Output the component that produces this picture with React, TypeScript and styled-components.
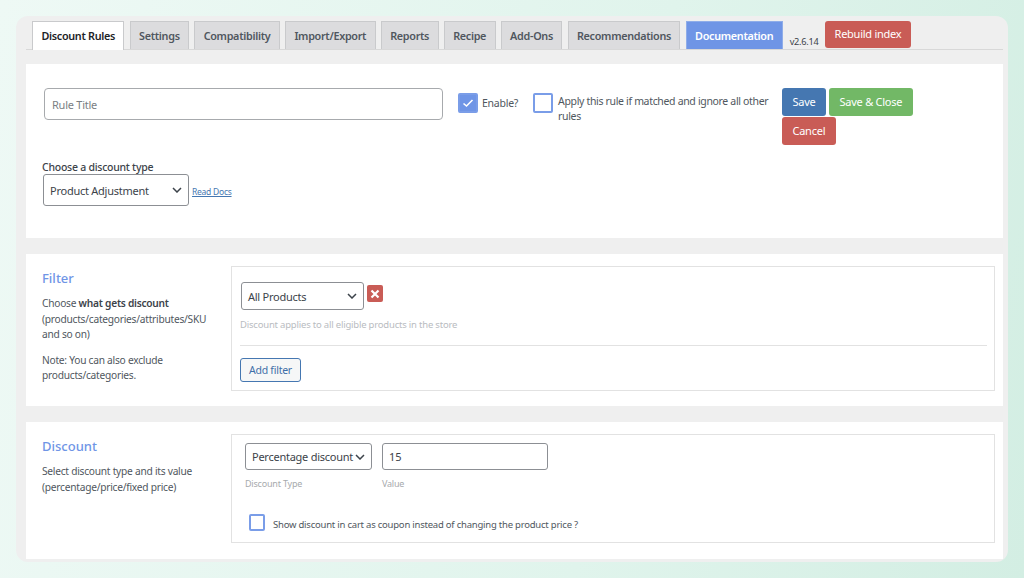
import React from 'react';
import styled, { createGlobalStyle } from 'styled-components';

const GlobalStyle = createGlobalStyle`
  html, body {
    margin: 0;
    padding: 0;
    height: 578px;
    overflow: hidden;
  }
  body {
    font-family: 'Noto Sans', 'Open Sans', sans-serif;
    letter-spacing: -0.25px;
    color: #50575e;
    background: linear-gradient(100deg, #eef9f5 0%, #e0f4ec 60%, #d3eee3 100%);
  }
  * {
    box-sizing: border-box;
  }
`;

const Chevron = () => (
  <svg width="10" height="6" viewBox="0 0 10 6" fill="none">
    <path d="M1 1l4 4 4-4" stroke="#3c434a" strokeWidth="1.5" />
  </svg>
);

const Tick = () => (
  <svg width="12" height="10" viewBox="0 0 12 10" fill="none">
    <path d="M1.5 5.5l3 2.5 6-6" stroke="#fff" strokeWidth="1.6" />
  </svg>
);

const tabs = [
  'Settings',
  'Compatibility',
  'Import/Export',
  'Reports',
  'Recipe',
  'Add-Ons',
  'Recommendations',
];

const App = () => {
  return (
    <>
      <GlobalStyle />
      <Frame>
        <TabBar>
          <Tab $active>Discount Rules</Tab>
          {tabs.map(tab => (
            <Tab key={tab}>{tab}</Tab>
          ))}
          <DocTab>Documentation</DocTab>
          <Version>v2.6.14</Version>
          <RebuildButton>Rebuild index</RebuildButton>
        </TabBar>

        <HeaderPanel>
          <TopRow>
            <TitleInput placeholder="Rule Title" />
            <EnableBox>
              <CheckBox $checked>
                <Tick />
              </CheckBox>
              <CheckText>Enable?</CheckText>
            </EnableBox>
            <ExclusiveBox>
              <CheckBox />
              <ExclusiveText>
                Apply this rule if matched and ignore all other rules
              </ExclusiveText>
            </ExclusiveBox>
            <ActionButtons>
              <ActionButton $color="#4577b1">Save</ActionButton>
              <ActionButton $color="#72b866">Save &amp; Close</ActionButton>
              <ActionButton $color="#c95c56">Cancel</ActionButton>
            </ActionButtons>
          </TopRow>
          <TypeLabel>Choose a discount type</TypeLabel>
          <TypeRow>
            <SelectBox $width={146} $height={32}>
              Product Adjustment
              <Chevron />
            </SelectBox>
            <DocsLink>Read Docs</DocsLink>
          </TypeRow>
        </HeaderPanel>

        <SectionPanel>
          <SideColumn>
            <SectionTitle>Filter</SectionTitle>
            <SideText>
              Choose <strong>what gets discount</strong>
              <br />
              (products/categories/attributes/SKU and so on)
            </SideText>
            <SideText>Note: You can also exclude products/categories.</SideText>
          </SideColumn>
          <FilterBox>
            <FilterRow>
              <SelectBox $width={123} $height={28}>
                All Products
                <Chevron />
              </SelectBox>
              <RemoveButton>
                <svg width="10" height="10" viewBox="0 0 10 10" fill="none">
                  <path d="M1.5 1.5l7 7M8.5 1.5l-7 7" stroke="#fff" strokeWidth="2.2" />
                </svg>
              </RemoveButton>
            </FilterRow>
            <HintText>Discount applies to all eligible products in the store</HintText>
            <Divider />
            <AddFilterButton>Add filter</AddFilterButton>
          </FilterBox>
        </SectionPanel>

        <DiscountPanel>
          <SideColumn>
            <SectionTitle>Discount</SectionTitle>
            <SideText>
              Select discount type and its value (percentage/price/fixed price)
            </SideText>
          </SideColumn>
          <DiscountBox>
            <ValueRow>
              <ValueField>
                <SelectBox $width={127} $height={27}>
                  Percentage discount
                  <Chevron />
                </SelectBox>
                <FieldLabel>Discount Type</FieldLabel>
              </ValueField>
              <ValueField>
                <ValueInput defaultValue="15" />
                <FieldLabel>Value</FieldLabel>
              </ValueField>
            </ValueRow>
            <CouponRow>
              <CheckBox $small />
              <CouponText>
                Show discount in cart as coupon instead of changing the product price ?
              </CouponText>
            </CouponRow>
          </DiscountBox>
        </DiscountPanel>
      </Frame>
    </>
  );
};

const Frame = styled.div`
  width: 992px;
  height: 546px;
  margin: 16px 0 0 16px;
  padding: 5px 5px 0 10px;
  background-color: #efefef;
  border-radius: 12px;
  overflow: hidden;
`;

const TabBar = styled.div`
  display: flex;
  align-items: flex-end;
  height: 29px;
  padding-left: 6px;
  border-bottom: 1px solid #d8d8d8;
  margin-bottom: 14px;
`;

const Tab = styled.div<{ $active?: boolean }>`
  height: 28px;
  line-height: 27px;
  padding: 0 8.4px;
  margin-right: 5.2px;
  font-size: 10.8px;
  font-weight: 600;
  letter-spacing: -0.3px;
  white-space: nowrap;
  border: 1px solid #c9cacc;
  border-bottom: none;
  color: ${props => (props.$active ? '#1d2327' : '#50575e')};
  background-color: ${props => (props.$active ? '#fff' : '#dcdcde')};
  ${props => (props.$active ? 'margin-bottom: -1px; height: 29px;' : '')}
`;

const DocTab = styled(Tab)`
  color: #fff;
  background-color: #6f95e6;
  border-color: #8fade9;
  margin-right: 7px;
`;

const Version = styled.span`
  font-size: 9.2px;
  color: #3c434a;
  margin-right: 6px;
  padding-bottom: 1px;
`;

const RebuildButton = styled.div`
  height: 27px;
  line-height: 26px;
  padding: 0 10px;
  font-size: 11px;
  color: #fff;
  background-color: #c95c56;
  border-radius: 3px;
  margin-bottom: 1px;
`;

const HeaderPanel = styled.section`
  height: 174px;
  padding: 24px 18px 0 16px;
  background-color: #fff;
  margin-bottom: 16px;
`;

const TopRow = styled.div`
  display: flex;
  align-items: flex-start;
  height: 72px;
  padding-left: 2px;
`;

const TitleInput = styled.input`
  width: 399px;
  height: 32px;
  padding: 0 7px;
  font-family: inherit;
  font-size: 11px;
  letter-spacing: inherit;
  border: 1px solid #a7aaad;
  border-radius: 4px;
  outline: none;
  &::placeholder {
    color: #7b7f84;
  }
`;

const EnableBox = styled.div`
  display: flex;
  align-items: center;
  gap: 4px;
  width: 75px;
  margin: 5px 0 0 15px;
`;

const CheckBox = styled.span<{ $checked?: boolean; $small?: boolean }>`
  display: inline-flex;
  align-items: center;
  justify-content: center;
  flex-shrink: 0;
  width: ${props => (props.$small ? '16px' : '20px')};
  height: ${props => (props.$small ? '17px' : '20px')};
  border: 2px solid #7a9de8;
  border-radius: 2px;
  background-color: ${props => (props.$checked ? '#6f95e6' : '#fff')};
`;

const CheckText = styled.span`
  font-size: 10.5px;
  color: #50575e;
`;

const ExclusiveBox = styled.div`
  display: flex;
  gap: 5px;
  width: 249px;
  margin-top: 5px;
`;

const ExclusiveText = styled.span`
  width: 216px;
  margin-top: 1px;
  font-size: 10.5px;
  letter-spacing: -0.33px;
  line-height: 15px;
  color: #50575e;
`;

const ActionButtons = styled.div`
  display: flex;
  flex-wrap: wrap;
  align-content: flex-start;
  gap: 1px 3px;
  width: 140px;
`;

const ActionButton = styled.div<{ $color: string }>`
  height: 28px;
  line-height: 27px;
  padding: 0 10.5px;
  font-size: 11px;
  color: #fff;
  background-color: ${props => props.$color};
  border-radius: 3px;
`;

const TypeLabel = styled.div`
  font-size: 10.5px;
  font-weight: 500;
  line-height: 14px;
  color: #3c434a;
`;

const TypeRow = styled.div`
  display: flex;
  align-items: center;
  gap: 3px;
  padding-left: 1px;
`;

const SelectBox = styled.div<{ $width: number; $height: number }>`
  display: flex;
  align-items: center;
  justify-content: space-between;
  width: ${props => props.$width}px;
  height: ${props => props.$height}px;
  padding: 0 6px 0 6px;
  font-size: 11px;
  white-space: nowrap;
  color: #3c434a;
  background-color: #fff;
  border: 1px solid #8c8f94;
  border-radius: 3px;
`;

const DocsLink = styled.a`
  font-size: 8.5px;
  color: #4577b1;
  text-decoration: underline;
  margin-top: 3px;
`;

const SectionPanel = styled.section`
  display: flex;
  height: 152px;
  padding: 12px 8px 0 16px;
  background-color: #fff;
  margin-bottom: 16px;
`;

const DiscountPanel = styled(SectionPanel)`
  height: 137px;
  margin-bottom: 0;
`;

const SideColumn = styled.div`
  flex-shrink: 0;
  width: 189px;
`;

const SectionTitle = styled.h3`
  margin: 0 0 9px;
  padding-top: 3px;
  font-size: 13px;
  font-weight: 500;
  letter-spacing: 0;
  line-height: 18px;
  color: #6f95e6;
`;

const SideText = styled.p`
  margin: 0 0 10px;
  width: 172px;
  font-size: 10.2px;
  line-height: 15.6px;
  color: #50575e;
  strong {
    font-weight: 600;
    color: #3c434a;
  }
`;

const FilterBox = styled.div`
  flex: 1;
  height: 125px;
  padding: 15px 7px 0 8px;
  border: 1px solid #e2e2e2;
`;

const FilterRow = styled.div`
  display: flex;
  align-items: flex-start;
  gap: 3px;
  padding-left: 1px;
`;

const RemoveButton = styled.div`
  display: flex;
  align-items: center;
  justify-content: center;
  width: 16px;
  height: 17px;
  margin-top: 3px;
  background-color: #c95c56;
  border-radius: 2px;
`;

const HintText = styled.div`
  margin-top: 8px;
  font-size: 9.5px;
  letter-spacing: -0.2px;
  line-height: 13px;
  color: #b9bcbf;
`;

const Divider = styled.hr`
  margin: 14px 0 11px;
  border: none;
  border-top: 1px solid #e2e2e2;
`;

const AddFilterButton = styled.div`
  display: inline-block;
  height: 24px;
  line-height: 22px;
  padding: 0 8px;
  font-size: 10.5px;
  color: #3f6fa8;
  background-color: #f6f7f7;
  border: 1px solid #4577b1;
  border-radius: 3px;
`;

const DiscountBox = styled(FilterBox)`
  height: 109px;
  padding: 8px 13px 0;
`;

const ValueRow = styled.div`
  display: flex;
  gap: 10px;
`;

const ValueField = styled.div`
  display: flex;
  flex-direction: column;
`;

const ValueInput = styled.input`
  width: 166px;
  height: 27px;
  padding: 0 6px;
  font-family: inherit;
  font-size: 11px;
  color: #3c434a;
  border: 1px solid #8c8f94;
  border-radius: 3px;
  outline: none;
`;

const FieldLabel = styled.span`
  margin-top: 8px;
  font-size: 9px;
  letter-spacing: -0.2px;
  line-height: 12px;
  color: #a7aaad;
`;

const CouponRow = styled.div`
  display: flex;
  align-items: flex-start;
  gap: 8px;
  margin: 24px 0 0 4px;
`;

const CouponText = styled.span`
  margin-top: 4px;
  font-size: 9.5px;
  letter-spacing: -0.22px;
  line-height: 14px;
  color: #50575e;
`;

export default App;
